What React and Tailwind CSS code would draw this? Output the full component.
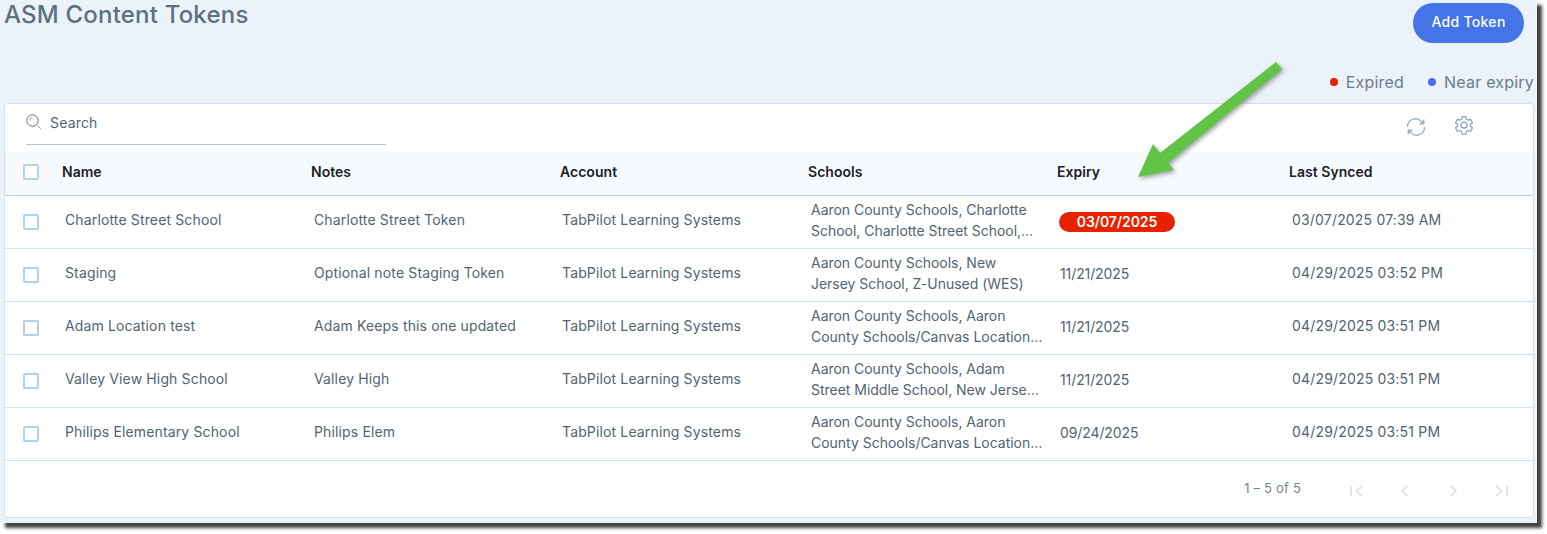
import React from "react";

const rows = [
  {
    name: "Charlotte Street School",
    notes: "Charlotte Street Token",
    schools: ["Aaron County Schools, Charlotte", "School, Charlotte Street School,…"],
    expiry: "03/07/2025",
    expired: true,
    synced: "03/07/2025 07:39 AM",
  },
  {
    name: "Staging",
    notes: "Optional note Staging Token",
    schools: ["Aaron County Schools, New", "Jersey School, Z-Unused (WES)"],
    expiry: "11/21/2025",
    synced: "04/29/2025 03:52 PM",
  },
  {
    name: "Adam Location test",
    notes: "Adam Keeps this one updated",
    schools: ["Aaron County Schools, Aaron", "County Schools/Canvas Location…"],
    expiry: "11/21/2025",
    synced: "04/29/2025 03:51 PM",
  },
  {
    name: "Valley View High School",
    notes: "Valley High",
    schools: ["Aaron County Schools, Adam", "Street Middle School, New Jerse…"],
    expiry: "11/21/2025",
    synced: "04/29/2025 03:51 PM",
  },
  {
    name: "Philips Elementary School",
    notes: "Philips Elem",
    schools: ["Aaron County Schools, Aaron", "County Schools/Canvas Location…"],
    expiry: "09/24/2025",
    synced: "04/29/2025 03:51 PM",
  },
];

const gridCols = "grid grid-cols-[57px_249px_249px_248px_249px_232px_1fr] items-center";

function Checkbox() {
  return <div className="w-4 h-4 ml-[18px] rounded-[2px] border-2 border-[#b5d0ea] bg-white" />;
}

function SearchIcon() {
  return (
    <svg width="16" height="16" viewBox="0 0 16 16" fill="none" stroke="#5f6f7e" strokeWidth="1" className="shrink-0">
      <circle cx="6.5" cy="6.5" r="5.7" />
      <path d="M3.4 6.5a3.1 3.1 0 0 1 3.1-3.1" stroke="#9fb0c0" />
      <path d="M11.5 11.5l3.2 3.2" stroke="#8797a6" />
    </svg>
  );
}

function SyncIcon() {
  return (
    <svg width="20" height="20" viewBox="0 0 20 20" fill="none" stroke="#9db2c5" strokeWidth="1.3">
      <path d="M1.5 10a8 8 0 0 1 14-5.4" />
      <path d="M18.5 10a8 8 0 0 1-14 5.4" />
      <path d="M18.4 1.8v5.7h-5.6z" fill="#9db2c5" stroke="none" />
      <path d="M1.6 18.2v-5.7h5.6z" fill="#9db2c5" stroke="none" />
    </svg>
  );
}

function GearIcon() {
  return (
    <svg width="20" height="20" viewBox="0 0 24 24" fill="none" stroke="#8ba3b8" strokeWidth="1.5" strokeLinejoin="round">
      <path d="M9.7 2h4.6l.7 3.2 1.700 1 3.100-1 2.300 4-2.400 2.200v2l2.400 2.200-2.300 4-3.100-1-1.700 1-.7 3.200H9.700L9 19.600l-1.700-1-3.100 1-2.300-4 2.400-2.200v-2L1.900 9.200l2.300-4 3.100 1 1.700-1z" />
      <circle cx="12" cy="12" r="3.6" />
    </svg>
  );
}

function PagerIcon({ d }) {
  return (
    <svg width="16" height="16" viewBox="0 0 16 16" fill="none" stroke="#dfe3e7" strokeWidth="1.7">
      <path d={d} />
    </svg>
  );
}

function Arrow() {
  return (
    <svg
      className="absolute left-0 top-0 pointer-events-none drop-shadow-[2px_2px_2px_rgba(0,0,0,0.35)]"
      width="1547"
      height="534"
      viewBox="0 0 1547 534"
    >
      <polygon
        points="1276,62 1282,69 1168,163 1174,170 1138,177 1153,144 1160,153"
        fill="#62c446"
      />
    </svg>
  );
}

export default function App() {
  return (
    <div className="relative w-[1547px] h-[534px] bg-white overflow-hidden font-['Inter',sans-serif]">
      <div className="w-[1537px] h-[523px] bg-[#ebf2fa] shadow-[5px_5px_3px_rgba(20,20,20,0.8)] flex flex-col">
        <div className="flex justify-between h-[73px] pl-[4px] pr-[13px] pt-[3px]">
          <h1 className="text-[24px] leading-[24px] text-[#5d7080] font-medium tracking-[0.2px]">ASM Content Tokens</h1>
          <button className="w-[111px] h-10 pb-[3px] rounded-[20px] bg-[#4474e6] text-white text-[14px] font-medium tracking-[0.3px]">
            Add Token
          </button>
        </div>

        <div className="flex justify-end items-center gap-[24px] h-[19px] -mt-[1px] pr-[3px] text-[16px] tracking-[0.2px] text-[#6c7c8b]">
          <div className="flex items-center gap-2">
            <span className="w-2 h-2 rounded-full bg-[#e62200]" />
            Expired
          </div>
          <div className="flex items-center gap-2">
            <span className="w-2 h-2 rounded-full bg-[#4e6ef2]" />
            Near expiry
          </div>
        </div>

        <div className="mt-[12px] ml-1 w-[1530px] h-[415px] flex flex-col bg-white border border-[#cfe2f5] rounded-[4px]">
          <div className="flex justify-between h-[48px] pl-[21px] pr-[59px]">
            <div className="w-[360px] h-[41px] pb-[4px] flex items-center gap-2 border-b border-[#a9c9e6]">
              <SearchIcon />
              <span className="text-[14px] tracking-[0.18px] text-[#55656f]">Search</span>
            </div>
            <div className="flex gap-[28px] pt-[12px]">
              <div className="pt-[1px]"><SyncIcon /></div>
              <div className="-mt-[1px]"><GearIcon /></div>
            </div>
          </div>

          <div className={`${gridCols} h-[44px] pb-[3px] bg-[#f7fafd] border-b border-[#b5d0ea] text-[14px] font-semibold tracking-[0.03px] text-[#1b2126]`}>
            <Checkbox />
            <div className="pb-[2px]">Name</div>
            <div className="pb-[2px]">Notes</div>
            <div className="pb-[2px]">Account</div>
            <div className="pb-[2px]">Schools</div>
            <div className="pb-[2px]">Expiry</div>
            <div className="pb-[2px]">Last Synced</div>
          </div>

          {rows.map((row) => (
            <div key={row.name} className={`${gridCols} h-[53px] border-b border-[#cfe2f5] text-[14px] tracking-[0.14px] text-[#55636f]`}>
              <Checkbox />
              <div className="pl-[3px] pb-[6px]">{row.name}</div>
              <div className="pl-[3px] pb-[6px]">{row.notes}</div>
              <div className="pl-[2px] pb-[6px]">TabPilot Learning Systems</div>
              <div className="pl-[3px] pb-[4px] leading-[21px] whitespace-nowrap tracking-[-0.02px]">
                {row.schools.map((line) => (
                  <div key={line}>{line}</div>
                ))}
              </div>
              <div className={`pl-[3px] tracking-[-0.1px] ${row.expired ? "pb-[2px]" : "pb-[4px]"}`}>
                {row.expired ? (
                  <span className="inline-block w-[116px] h-5 -ml-px rounded-[10px] bg-[#e62200] text-white font-semibold text-center leading-5">
                    {row.expiry}
                  </span>
                ) : (
                  row.expiry
                )}
              </div>
              <div className="pl-[3px] pb-[6px] tracking-[0.18px]">{row.synced}</div>
            </div>
          ))}

          <div className="flex flex-1 justify-end items-center pr-[24px] pt-[4px]">
            <span className="mr-[48px] -mt-[5px] text-[13px] tracking-[0.2px] text-[#76858f]">1 – 5 of 5</span>
            <div className="flex gap-[32px]">
              <PagerIcon d="M2 3v10M13 3L7 8l6 5" />
              <PagerIcon d="M10.500 3L5 8l5.500 5" />
              <PagerIcon d="M5.500 3L11 8l-5.500 5" />
              <PagerIcon d="M3 3l6 5-6 5M14 3v10" />
            </div>
          </div>
        </div>
      </div>
      <Arrow />
    </div>
  );
}
